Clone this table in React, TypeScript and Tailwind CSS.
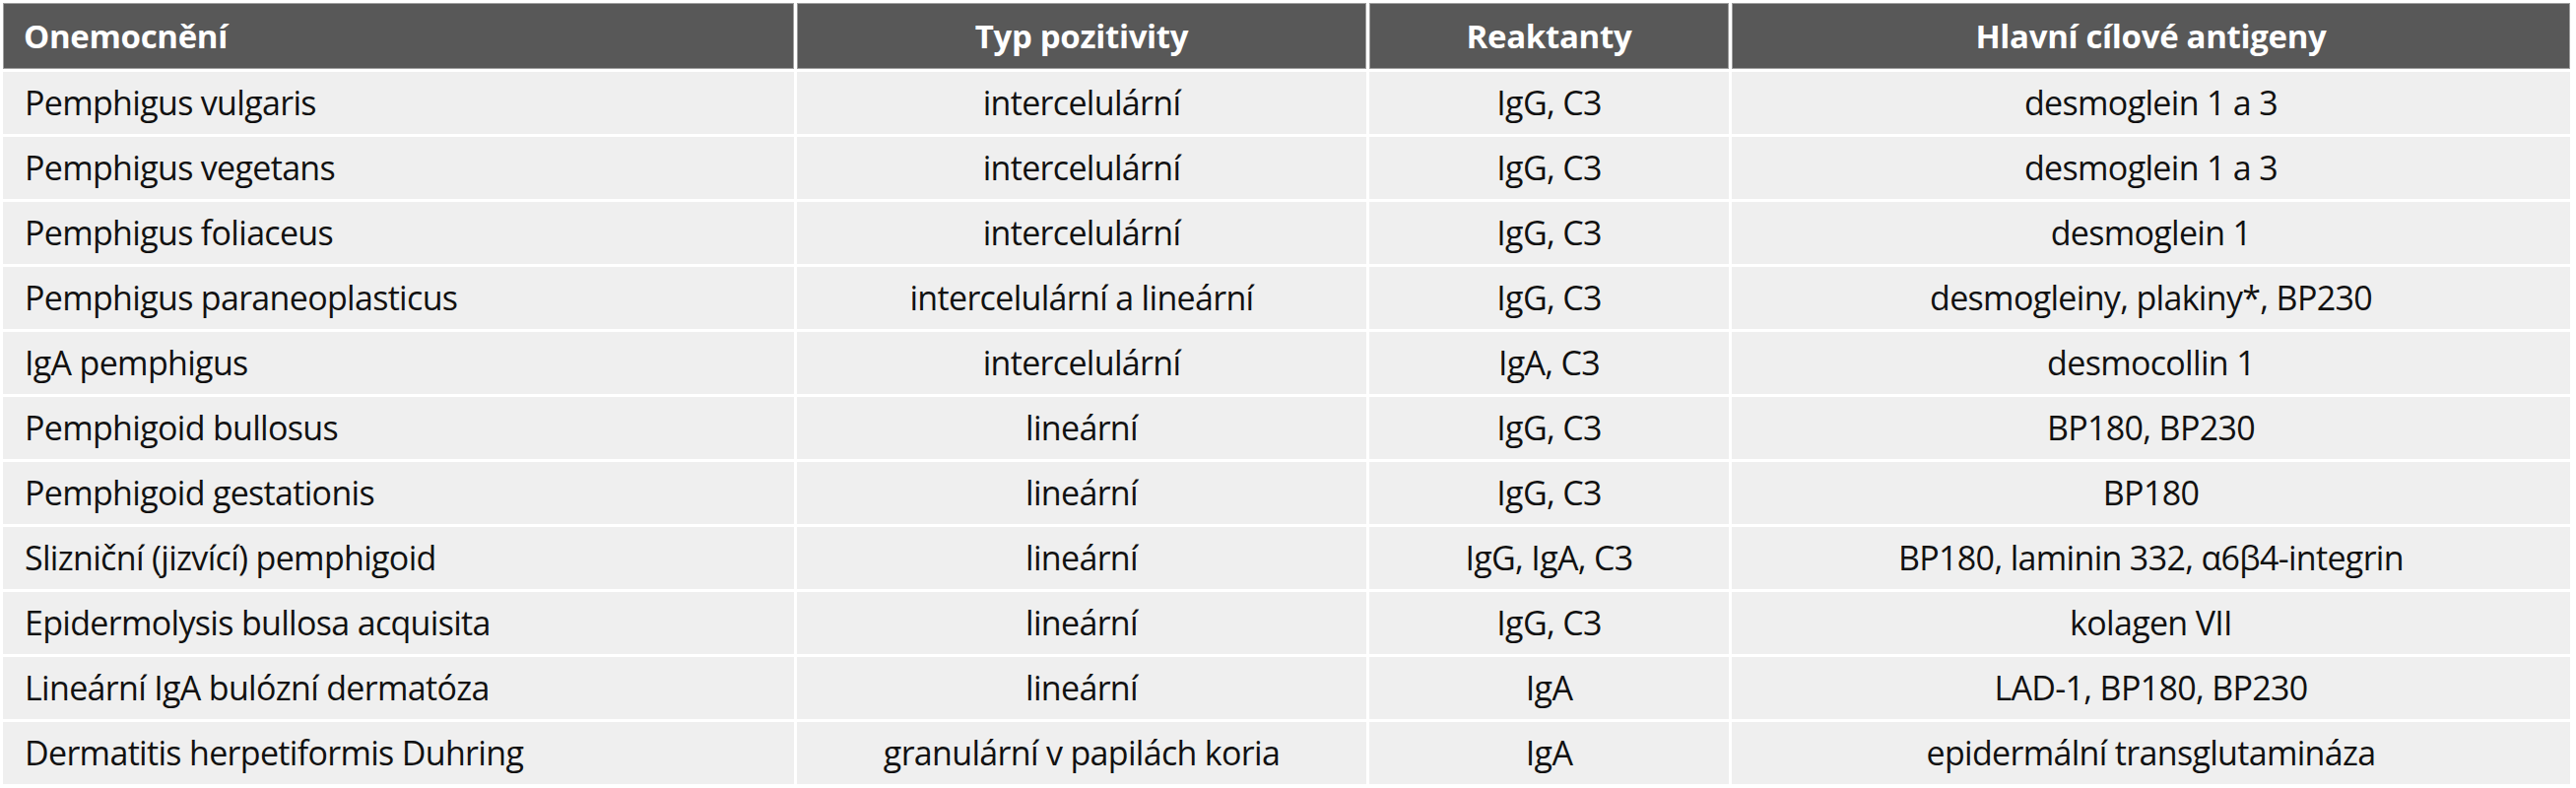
import React from 'react';

type Row = [string, string, string, string];

const rows: Row[] = [
  ['Pemphigus vulgaris', 'intercelulární', 'IgG, C3', 'desmoglein 1 a 3'],
  ['Pemphigus vegetans', 'intercelulární', 'IgG, C3', 'desmoglein 1 a 3'],
  ['Pemphigus foliaceus', 'intercelulární', 'IgG, C3', 'desmoglein 1'],
  ['Pemphigus paraneoplasticus', 'intercelulární a lineární', 'IgG, C3', 'desmogleiny, plakiny*, BP230'],
  ['IgA pemphigus', 'intercelulární', 'IgA, C3', 'desmocollin 1'],
  ['Pemphigoid bullosus', 'lineární', 'IgG, C3', 'BP180, BP230'],
  ['Pemphigoid gestationis', 'lineární', 'IgG, C3', 'BP180'],
  ['Slizniční (jizvící) pemphigoid', 'lineární', 'IgG, IgA, C3', 'BP180, laminin 332, α6β4-integrin'],
  ['Epidermolysis bullosa acquisita', 'lineární', 'IgG, C3', 'kolagen VII'],
  ['Lineární IgA bulózní dermatóza', 'lineární', 'IgA', 'LAD-1, BP180, BP230'],
  ['Dermatitis herpetiformis Duhring', 'granulární v papilách koria', 'IgA', 'epidermální transglutamináza'],
];

const headers = ['Onemocnění', 'Typ pozitivity', 'Reaktanty', 'Hlavní cílové antigeny'];

const App: React.FC = () => {
  return (
    <div className="min-h-[800px] w-[2615px] bg-white p-[3px] font-['Open_Sans',sans-serif]">
      <div className="grid grid-cols-[803px_578px_365px_851px] gap-[3px]">
        {/* header */}
        {headers.map((h, i) => (
          <div
            key={h}
            className={
              'flex h-[67px] items-center border border-[#9d9d9d] bg-[#585858] text-[33px] font-bold tracking-[-0.01em] text-white ' +
              (i === 0 ? 'pl-[20px]' : 'justify-center')
            }
          >
            {h}
          </div>
        ))}

        {/* body */}
        {rows.map((r) =>
          r.map((cell, i) => (
            <div
              key={r[0] + i}
              className={
                'flex h-[63px] items-center bg-[#efefef] text-[34px] tracking-[-0.02em] text-[#111]' +
                (i === 0 ? ' pl-[22px]' : ' justify-center')
              }
            >
              {cell}
            </div>
          ))
        )}
      </div>
    </div>
  );
};

export default App;
